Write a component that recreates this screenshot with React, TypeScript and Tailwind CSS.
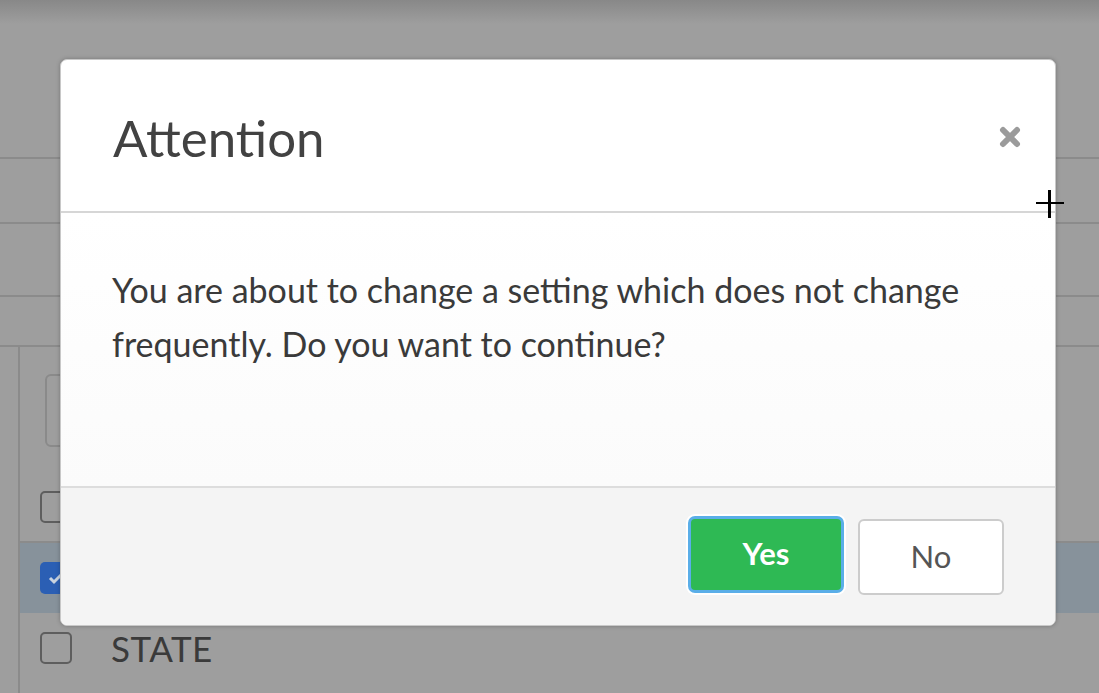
import React from "react";

function Checkbox({ checked }: { checked?: boolean }) {
  if (checked) {
    return (
      <div className="w-[32px] h-[32px] rounded-[5px] bg-[#2b5fb4] flex items-center justify-center">
        <svg width="20" height="20" viewBox="0 0 20 20">
          <path d="M4 10l4 4 8-8" stroke="#c9d3df" strokeWidth="3" fill="none" />
        </svg>
      </div>
    );
  }
  return <div className="w-[32px] h-[32px] rounded-[5px] border-2 border-[#5e5e5e]" />;
}

export default function App() {
  return (
    <div
      className="relative w-[1099px] h-[693px] overflow-hidden bg-[#9e9e9e]"
      style={{ fontFamily: "Lato, 'Open Sans', sans-serif" }}
    >
      {/* background page */}
      <div className="flex flex-col h-full">
        <div className="h-[24px] bg-gradient-to-b from-[#888888] to-[#9e9e9e]" />
        <div className="h-[133px]" />
        <div className="h-[2px] bg-[#8b8b8b]" />
        <div className="h-[63px]" />
        <div className="h-[2px] bg-[#8b8b8b]" />
        <div className="h-[71px]" />
        <div className="h-[2px] bg-[#8b8b8b]" />
        <div className="h-[48px]" />
        <div className="h-[2px] bg-[#8b8b8b]" />
        <div className="flex-1 flex">
          <div className="w-[20px] border-r-2 border-[#8b8b8b]" />
          <div className="flex-1 flex flex-col">
            <div className="pt-[27px] pl-[25px]">
              <div className="w-[300px] h-[73px] rounded-[6px] border-2 border-[#8a8a8a]" />
            </div>
            <div className="h-[70px] mt-[26px] border-b-2 border-[#8b8b8b] flex items-center pl-[20px]">
              <Checkbox />
            </div>
            <div className="h-[70px] bg-[#87929b] flex items-center pl-[20px]">
              <Checkbox checked />
            </div>
            <div className="h-[70px] flex items-center pl-[20px] gap-[39px]">
              <Checkbox />
              <span className="text-[35px] text-[#3a3a3a] tracking-[0.5px]">STATE</span>
            </div>
          </div>
        </div>
      </div>

      {/* modal */}
      <div className="absolute left-[60px] top-[59px] w-[996px] h-[567px] bg-white rounded-[7px] border border-[#c8c8c8] shadow-[0_0_4px_rgba(0,0,0,0.25)] flex flex-col overflow-hidden">
        <div className="h-[153px] flex items-center justify-between pl-[52px] pr-[32px] border-b-2 border-[#d6d6d6] shrink-0">
          <h1 className="text-[51px] text-[#424242] leading-none mt-[4px]">Attention</h1>
          <svg width="26" height="26" viewBox="0 0 26 26" className="mt-[2px]">
            <path d="M6 6L20 20M20 6L6 20" stroke="#9b9b9b" strokeWidth="6" strokeLinecap="round" />
          </svg>
        </div>
        <div className="flex-1 pl-[51px] pr-[30px] pt-[50px] bg-gradient-to-b from-white to-[#fbfbfb]">
          <p className="text-[34px] leading-[54px] text-[#3a3a3a] whitespace-nowrap">
            You are about to change a setting which does not change
            <br />
            frequently. Do you want to continue?
          </p>
        </div>
        <div className="h-[139px] shrink-0 bg-[#f4f4f4] border-t-2 border-[#dddddd] flex items-center justify-end pr-[51px] gap-[14px]">
          <button className="w-[156px] h-[77px] rounded-[7px] bg-[#2eb954] text-white text-[31px] font-bold border-[3px] border-[#5aaee8] ring-2 ring-white -mt-[4px] pb-[3px]">
            Yes
          </button>
          <button className="w-[146px] h-[76px] rounded-[6px] bg-white text-[#555555] text-[31px] border-2 border-[#cccccc]">
            No
          </button>
        </div>
      </div>

      {/* cursor crosshair */}
      <div className="absolute left-[1036px] top-[190px] w-[28px] h-[28px] pointer-events-none">
        <div className="absolute left-[12px] top-0 w-[3px] h-[28px] bg-black" />
        <div className="absolute left-0 top-[12px] w-[28px] h-[2px] bg-black" />
      </div>
    </div>
  );
}
